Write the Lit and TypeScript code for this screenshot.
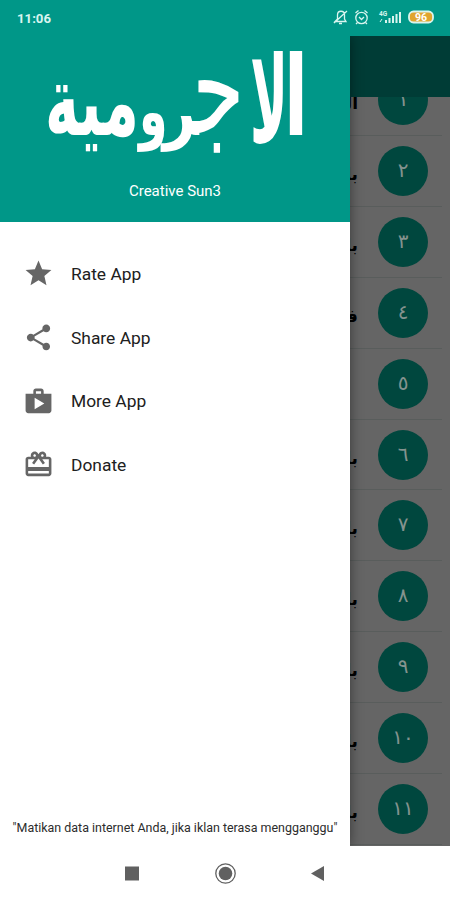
import { LitElement, html, css, svg } from "lit";
import { customElement } from "lit/decorators.js";

const chapters = [
  { n: "١", title: "الكلام" },
  { n: "٢", title: "باب" },
  { n: "٣", title: "باب" },
  { n: "٤", title: "فصل" },
  { n: "٥", title: "" },
  { n: "٦", title: "باب" },
  { n: "٧", title: "باب" },
  { n: "٨", title: "باب" },
  { n: "٩", title: "باب" },
  { n: "١٠", title: "باب" },
  { n: "١١", title: "باب" },
];

const menu = [
  {
    label: "Rate App",
    icon: svg`<path d="M12 17.27 18.18 21l-1.64-7.03L22 9.24l-7.19-.61L12 2 9.19 8.63 2 9.24l5.46 4.73L5.82 21z"/>`,
  },
  {
    label: "Share App",
    icon: svg`<path d="M18 16.08c-.76 0-1.44.3-1.96.77L8.91 12.7c.05-.23.09-.46.09-.7s-.04-.47-.09-.7l7.05-4.11c.54.5 1.25.81 2.04.81 1.66 0 3-1.34 3-3s-1.34-3-3-3-3 1.34-3 3c0 .24.04.47.09.7L8.04 9.81C7.5 9.31 6.79 9 6 9c-1.66 0-3 1.34-3 3s1.34 3 3 3c.79 0 1.5-.31 2.04-.81l7.12 4.16c-.05.21-.08.43-.08.65 0 1.61 1.31 2.92 2.92 2.92s2.92-1.31 2.92-2.92-1.31-2.92-2.92-2.92z"/>`,
  },
  {
    label: "More App",
    icon: svg`<path d="M16 6V4c0-1.11-.89-2-2-2h-4c-1.11 0-2 .89-2 2v2H2v13c0 1.11.89 2 2 2h16c1.11 0 2-.89 2-2V6h-6zm-6-2h4v2h-4V4zM9 18V9l7.5 4.5L9 18z"/>`,
  },
  {
    label: "Donate",
    icon: svg`<path d="M20 6h-2.18c.11-.31.18-.65.18-1 0-1.66-1.34-3-3-3-1.05 0-1.96.54-2.5 1.35l-.5.67-.5-.68C10.96 2.54 10.05 2 9 2 7.34 2 6 3.34 6 5c0 .35.07.69.18 1H4c-1.11 0-1.99.89-1.99 2L2 19c0 1.11.89 2 2 2h16c1.11 0 2-.89 2-2V8c0-1.11-.89-2-2-2zm-5-2c.55 0 1 .45 1 1s-.45 1-1 1-1-.45-1-1 .45-1 1-1zM9 4c.55 0 1 .45 1 1s-.45 1-1 1-1-.45-1-1 .45-1 1-1zm11 15H4v-2h16v2zm0-5H4V8h5.08L7 10.83 8.62 12 11 8.76l1-1.36 1 1.36L15.38 12 17 10.83 14.92 8H20v6z"/>`,
  },
];

@customElement("app-root")
class AppRoot extends LitElement {
  static styles = css`
    :host {
      display: flex;
      flex-direction: column;
      position: relative;
      width: 450px;
      height: 900px;
      overflow: hidden;
      background: #fff;
      font-family: Roboto, "DejaVu Sans", sans-serif;
    }
    .status {
      height: 36px;
      flex: none;
      box-sizing: border-box;
      padding: 0 15px 0 17px;
      display: flex;
      align-items: center;
      justify-content: space-between;
      background: #009788;
      color: #d9f5ef;
      font-size: 13.2px;
      font-weight: 700;
    }
    .status svg { display: block; }
    .screen {
      position: relative;
      height: 810px;
      flex: none;
      display: flex;
      flex-direction: column;
      overflow: hidden;
      background: #656565;
    }
    .toolbar { height: 61px; flex: none; background: #003c36; }
    .list { flex: 1; min-height: 0; overflow: hidden; }
    .rows { margin-top: -31.5px; padding-right: 8px; }
    .row {
      height: 70.83px;
      box-sizing: border-box;
      border-bottom: 1px solid #595d5c;
      display: flex;
      flex-direction: row-reverse;
      align-items: center;
      padding-right: 14px;
      gap: 20px;
    }
    .badge {
      width: 50px;
      height: 50px;
      flex: none;
      border-radius: 50%;
      background: #00473e;
      color: #84938f;
      display: flex;
      justify-content: center;
      align-items: center;
      font: 20px/24px "DejaVu Sans", sans-serif;
      padding-bottom: 2px;
      box-sizing: border-box;
    }
    .title {
      direction: rtl;
      color: #000;
      font: 700 17px/20px "DejaVu Sans", sans-serif;
      padding-top: 6px;
    }
    .drawer {
      position: absolute;
      left: 0;
      top: 0;
      bottom: 0;
      width: 350px;
      display: flex;
      flex-direction: column;
      background: #fff;
      box-shadow: 0 0 12px rgba(0, 0, 0, 0.45);
    }
    .head {
      height: 186px;
      flex: none;
      display: flex;
      flex-direction: column;
      align-items: center;
      background: #009788;
      color: #fff;
    }
    .logo { display: block; flex: none; overflow: visible; }
    .logo text {
      font-family: "DejaVu Sans", sans-serif;
      font-weight: 700;
      font-size: 50px;
      fill: #fff;
    }
    .logo .tall { font-weight: 400; }
    .author { font-size: 15px; line-height: 18px; margin-top: 10px; }
    .menu { display: flex; flex-direction: column; padding-top: 20px; }
    .item {
      height: 63.7px;
      display: flex;
      align-items: center;
      gap: 17px;
      padding-left: 23px;
      font-size: 17.4px;
      color: #202020;
    }
    .item svg { fill: #666; flex: none; }
    .note {
      margin: auto 0 0;
      height: 27px;
      text-align: center;
      font-size: 12.45px;
      line-height: 18px;
      color: #2c2c2c;
      white-space: nowrap;
    }
    .nav { flex: 1; background: #fff; }
    .nav svg { display: block; }
  `;

  render() {
    return html`
      <div class="status">
        <span>11:06</span>
        <svg width="104" height="20" viewBox="331 8 104 20" fill="none" stroke="#d9f5ef" stroke-width="1.3">
          <path d="M335 21.500h11l-1.500-2.500v-4c0-5-7-5-7 0v4zM339 23.500h3M334 23l13-12"/>
          <circle cx="361.500" cy="18" r="5.700"/>
          <path d="M355.500 13l3-2.500M367.500 13l-3-2.500M359 17l2.500 2.500 2.500-2.500M357.500 22.500l-1.500 1.500M365.500 22.500l1.500 1.500"/>
          <g stroke-width="2"><path d="M386 23v-3M389.500 23v-5M393 23v-7M396.500 23v-9M400 23v-11"/></g>
          <text x="379" y="15.500" font-size="6.500" fill="#d9f5ef" stroke="none">4G</text>
          <path d="M380 22l2-3" stroke-width="1"/>
          <rect x="409" y="11.500" width="24" height="11" rx="4.500" fill="#e0a52e" stroke-width="1.800"/>
          <text x="415" y="20.800" font-size="10.500" fill="#fff" stroke="none">96</text>
        </svg>
      </div>
      <div class="screen">
        <div class="toolbar"></div>
        <div class="list">
          <div class="rows">
            ${chapters.map(
              (c) => html`<div class="row"><span class="badge">${c.n}</span><span class="title">${c.title}</span></div>`
            )}
          </div>
        </div>
        <div class="drawer">
          <div class="head">
            <svg class="logo" width="350" height="136" viewBox="0 36 350 136">
              <text transform="translate(284 135) scale(1.4 2.2)">ا</text>
              <text transform="translate(250 142) scale(1.02 2.4)">لا</text>
              <text class="tall" transform="translate(192 133) scale(1.7 2.65)">ج&zwj;</text>
              <text transform="translate(163 135) scale(1.15 1.4)">&zwj;ر</text>
              <text transform="translate(139 135) scale(0.92 1.4)">و</text>
              <text transform="translate(45 135) scale(1.15 1.95)">مية</text>
            </svg>
            <div class="author">Creative Sun3</div>
          </div>
          <div class="menu">
            ${menu.map(
              (m) => html`<div class="item"><svg width="31" height="31" viewBox="0 0 24 24">${m.icon}</svg><span>${m.label}</span></div>`
            )}
          </div>
          <p class="note">"Matikan data internet Anda, jika iklan terasa mengganggu"</p>
        </div>
      </div>
      <div class="nav">
        <svg width="450" height="54" viewBox="0 846 450 54" fill="#606060">
          <rect x="125" y="866.500" width="14" height="14"/>
          <circle cx="225.500" cy="873.500" r="6.800"/>
          <circle cx="225.500" cy="873.500" r="9.700" fill="none" stroke="#606060" stroke-width="1.300"/>
          <path d="M311 873.500 324 866v15z"/>
        </svg>
      </div>
    `;
  }
}
